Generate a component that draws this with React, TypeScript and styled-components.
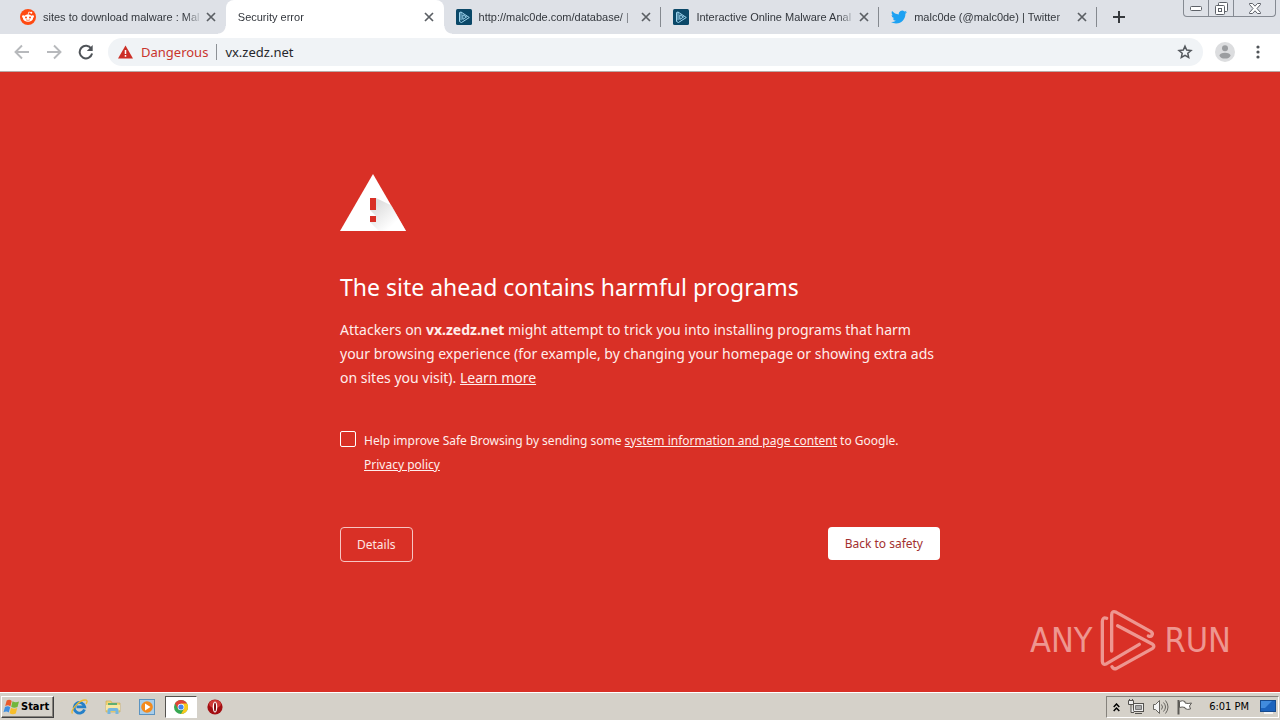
import React from "react";
import styled, { createGlobalStyle, css } from "styled-components";

const RED = "#d93026";
const UI_FONT = `"DejaVu Sans Condensed", "DejaVu Sans", sans-serif`;
const TAB_FONT = `"Liberation Sans", Arial, sans-serif`;
const PAGE_FONT = `"Noto Sans", "Open Sans", sans-serif`;

const GlobalStyle = createGlobalStyle`
  * { box-sizing: border-box; }
  body { margin: 0; font-family: ${PAGE_FONT}; }
  button { font: inherit; cursor: pointer; }
  svg { display: block; flex: none; }
`;

const Desktop = styled.div`
  display: flex;
  flex-direction: column;
  min-height: 100vh;
  background: ${RED};
`;

const TabStrip = styled.header`
  display: flex;
  align-items: flex-start;
  height: 34px;
  padding-left: 8px;
  background: #dee1e7;
`;

const TabList = styled.div`
  display: flex;
  flex: 0 1 1089px;
  min-width: 0;
  height: 34px;
`;

const Tab = styled.div<{ $active?: boolean; $divider?: boolean }>`
  position: relative;
  display: flex;
  flex: 1 1 0;
  align-items: center;
  min-width: 0;
  padding: 0 7px 0 12px;
  color: #33373d;
  & > svg {
    margin-right: 7px;
  }
  ${(p) =>
    p.$divider &&
    css`
      &::after {
        content: "";
        position: absolute;
        right: 0;
        top: 7px;
        width: 1px;
        height: 20px;
        background: #85898f;
      }
    `}
  ${(p) =>
    p.$active &&
    css`
      background: #fff;
      border-radius: 8px 8px 0 0;
      &::before,
      &::after {
        content: "";
        position: absolute;
        bottom: 0;
        width: 8px;
        height: 8px;
      }
      &::before {
        right: 100%;
        background: radial-gradient(circle at 0 0, transparent 7px, #fff 8px);
      }
      &::after {
        left: 100%;
        background: radial-gradient(circle at 100% 0, transparent 7px, #fff 8px);
      }
    `}
`;

const TabTitle = styled.span`
  flex: 1;
  min-width: 0;
  overflow: hidden;
  white-space: nowrap;
  font: 11px/16px ${TAB_FONT};
  mask-image: linear-gradient(to right, #000 calc(100% - 18px), transparent);
`;

const IconButton = styled.button<{ $size: number }>`
  display: flex;
  flex: none;
  align-items: center;
  justify-content: center;
  width: ${(p) => p.$size}px;
  height: ${(p) => p.$size}px;
  padding: 0;
  border: 0;
  background: none;
  color: #5b5f64;
`;

const NewTab = styled(IconButton)`
  margin: 6px 0 0 11px;
  color: #36393d;
`;

const WindowControls = styled.div`
  display: flex;
  flex: none;
  height: 17px;
  margin: 0 4px 0 auto;
  border: 1px solid #858a92;
  border-top: 0;
  border-radius: 0 0 4px 4px;
`;

const WindowButton = styled.button<{ $width: number }>`
  display: flex;
  align-items: center;
  justify-content: center;
  width: ${(p) => p.$width}px;
  padding: 0;
  border: 0;
  background: none;
  & + & {
    border-left: 1px solid #858a92;
  }
`;

const Toolbar = styled.div`
  display: flex;
  align-items: center;
  height: 38px;
  padding: 0 11px 2px 10px;
  gap: 8px;
  background: #fff;
  border-bottom: 1px solid #b9aaa7;
`;

const NavButtons = styled.div`
  display: flex;
  gap: 8px;
  margin-right: 2px;
`;

const Omnibox = styled.form`
  display: flex;
  flex: 1;
  align-items: center;
  gap: 8px;
  min-width: 0;
  height: 28px;
  padding: 0 6px 0 10px;
  border-radius: 14px;
  background: #f0f3f6;
  font-size: 13px;
`;

const Danger = styled.span`
  padding-right: 8px;
  border-right: 1px solid #8d9196;
  color: #c9352d;
  line-height: 16px;
`;

const Address = styled.input`
  flex: 1;
  min-width: 0;
  padding: 0;
  border: 0;
  outline: 0;
  background: none;
  color: #26282c;
  font: 13px/20px ${PAGE_FONT};
`;

const Page = styled.main`
  position: relative;
  flex: 1;
  padding: 102px 24px 24px;
  color: #fff;
`;

const Interstitial = styled.section`
  max-width: 600px;
  margin: 0 auto;
`;

const Heading = styled.h1`
  margin: 40px 0 15px;
  font-size: 23px;
  font-weight: 400;
  line-height: 32px;
`;

const Message = styled.p`
  margin: 0;
  font-size: 14px;
  line-height: 24px;
  color: #ffeeec;
`;

const Link = styled.a`
  color: inherit;
  text-decoration: underline;
`;

const OptIn = styled.div`
  display: flex;
  gap: 8px;
  margin-top: 39px;
  font-size: 12px;
  line-height: 24px;
  color: #ffeeec;
`;

const Checkbox = styled.input`
  flex: none;
  appearance: none;
  width: 16px;
  height: 16px;
  margin: 2px 0 0;
  border: 1px solid #fff;
  border-radius: 2px;
`;

const Actions = styled.div`
  display: flex;
  align-items: flex-start;
  justify-content: space-between;
  margin-top: 50px;
  font-size: 12px;
`;

const ActionButton = styled.button<{ $primary?: boolean }>`
  height: ${(p) => (p.$primary ? 33 : 35)}px;
  padding: 0 ${(p) => (p.$primary ? 17 : 16)}px;
  border: ${(p) => (p.$primary ? "0" : "1px solid #f7c5c2")};
  border-radius: 4px;
  background: ${(p) => (p.$primary ? "#fff" : "transparent")};
  color: ${(p) => (p.$primary ? "#a3302f" : "#ffe6e4")};
`;

const Watermark = styled.div`
  position: absolute;
  right: 49px;
  bottom: 20px;
  display: flex;
  align-items: center;
  gap: 8px;
  color: #ee9690;
  font: 34px/64px ${UI_FONT};
`;

const Taskbar = styled.footer`
  display: flex;
  align-items: center;
  height: 28px;
  padding: 1px 1px 0;
  border-top: 1px solid #fff;
  background: #d5d1c9;
`;

const StartButton = styled.button`
  display: flex;
  align-items: center;
  gap: 1px;
  width: 53px;
  height: 22px;
  padding: 0 1px;
  border: 1px solid;
  border-color: #fff #404040 #404040 #fff;
  background: #d5d1c9;
  box-shadow: inset -1px -1px #86827b;
  font: bold 11px/16px ${UI_FONT};
  color: #000;
`;

const QuickLaunch = styled.nav`
  display: flex;
  gap: 2px;
  margin-left: 9px;
`;

const TaskButton = styled.button<{ $pressed?: boolean }>`
  display: flex;
  align-items: center;
  justify-content: center;
  width: 32px;
  height: 22px;
  padding: 0;
  border: 1px solid transparent;
  background: none;
  ${(p) =>
    p.$pressed &&
    css`
      border-color: #55534f #fff #fff #55534f;
      background: #fff;
    `}
`;

const Tray = styled.div`
  display: flex;
  align-items: center;
  gap: 8px;
  height: 22px;
  margin-left: auto;
  padding: 0 2px 0 6px;
  border: 1px solid;
  border-color: #85827c #fff #fff #85827c;
`;

const Clock = styled.time`
  margin: 0 3px 0 8px;
  font: 11px/16px ${UI_FONT};
  color: #000;
`;

const CloseIcon = () => (
  <svg width="10" height="10" viewBox="0 0 10 10" stroke="currentColor" strokeWidth="1.7">
    <path d="M1 1l8 8M9 1l-8 8" />
  </svg>
);

const RedditIcon = () => (
  <svg width="16" height="16" viewBox="0 0 16 16">
    <circle cx="8" cy="8" r="8" fill="#ff4a12" />
    <path d="M8 6l.8-3 2.3.6" fill="none" stroke="#fff" strokeWidth=".8" />
    <circle cx="11.3" cy="3.7" r="1" fill="#fff" />
    <circle cx="3.3" cy="7.6" r="1.3" fill="#fff" />
    <circle cx="12.7" cy="7.6" r="1.3" fill="#fff" />
    <ellipse cx="8" cy="9.2" rx="5" ry="3.6" fill="#fff" />
    <circle cx="6" cy="8.5" r="1" fill="#ff4a12" />
    <circle cx="10" cy="8.5" r="1" fill="#ff4a12" />
    <path d="M6 10.8q2 1.1 4 0" fill="none" stroke="#ff4a12" strokeWidth=".7" />
  </svg>
);

const PlayIcon = () => (
  <svg width="16" height="16" viewBox="0 0 16 16">
    <rect width="16" height="16" rx="1.5" fill="#0b4868" />
    <g fill="none" stroke="#9ed5ef" strokeWidth="1" strokeLinejoin="round">
      <path d="M3.5 3.5v9l2 1 7.8-5L5 3v8.3" />
      <path d="M6.8 5.8v4.6L10.6 8zM3.5 3.5L5 3" />
    </g>
  </svg>
);

const TwitterIcon = () => (
  <svg width="16" height="14" viewBox="0 2 24 20" fill="#1da1f2">
    <path d="M23.95 4.57a10 10 0 0 1-2.82.77 4.96 4.96 0 0 0 2.16-2.72c-.95.55-2 .96-3.13 1.18a4.92 4.92 0 0 0-8.38 4.48C7.69 8.1 4.07 6.13 1.64 3.16a4.82 4.82 0 0 0-.67 2.48c0 1.7.87 3.2 2.19 4.1a4.9 4.9 0 0 1-2.23-.62v.06a4.92 4.92 0 0 0 3.95 4.83 5 5 0 0 1-2.21.08 4.94 4.94 0 0 0 4.6 3.42A9.87 9.87 0 0 1 0 19.54a13.99 13.99 0 0 0 7.56 2.21c9.05 0 14-7.5 14-13.98 0-.21 0-.42-.02-.63a9.94 9.94 0 0 0 2.46-2.55z" />
  </svg>
);

const ArrowIcon = ({ forward }: { forward?: boolean }) => (
  <svg width="16" height="16" viewBox="0 0 16 16" fill="none" stroke="#b7b9bc" strokeWidth="1.9">
    <path d={forward ? "M1 8h13M8 1.5L14.5 8 8 14.5" : "M15 8H2M8 1.5L1.5 8 8 14.5"} />
  </svg>
);

const ReloadIcon = () => (
  <svg width="16" height="16" viewBox="0 0 16 16" fill="none" stroke="#4f5358" strokeWidth="2">
    <path d="M13.3 4.7A6.3 6.3 0 1 0 14.1 9.6" />
    <path d="M14.7 1v6H8.8z" fill="#4f5358" stroke="none" />
  </svg>
);

const DangerIcon = () => (
  <svg width="15" height="14" viewBox="0 0 15 14">
    <path d="M7.5 0.5L15 13.5H0z" fill="#cc2f27" />
    <path d="M7.5 5v4M7.5 10v1.7" stroke="#fff" strokeWidth="1.5" />
  </svg>
);

const StarIcon = () => (
  <svg width="16" height="16" viewBox="0 0 16 16" fill="none" stroke="#54585d" strokeWidth="1.5">
    <path d="M8 2.2l1.7 3.9 4.3.4-3.2 2.8.9 4.2L8 11.3l-3.7 2.2.9-4.2L2 6.5l4.300-.4z" />
  </svg>
);

const AvatarIcon = () => (
  <svg width="20" height="20" viewBox="0 0 20 20">
    <circle cx="10" cy="10" r="10" fill="#dcdddf" />
    <circle cx="10" cy="6.3" r="3" fill="#9b9da0" />
    <ellipse cx="10" cy="13.6" rx="5.5" ry="2.9" fill="#9b9da0" />
  </svg>
);

const MenuIcon = () => (
  <svg width="4" height="14" viewBox="0 0 4 14" fill="#505458">
    <circle cx="2" cy="2" r="1.6" />
    <circle cx="2" cy="7" r="1.6" />
    <circle cx="2" cy="12" r="1.6" />
  </svg>
);

const WarningIcon = () => (
  <svg width="66" height="57" viewBox="0 0 66 57">
    <defs>
      <linearGradient id="shade" gradientUnits="userSpaceOnUse" x1="34" y1="32" x2="52" y2="52">
        <stop offset="0" stopColor="#c8c8c8" />
        <stop offset="1" stopColor="#fff" />
      </linearGradient>
    </defs>
    <path d="M33 0l33 57H0z" fill="#fff" />
    <path d="M36 24l15.500 7.600L66 57H39L30 48h6v-6l-6-6h6z" fill="url(#shade)" opacity=".6" />
    <path d="M30 24h6v12h-6zM30 42h6v6h-6z" fill={RED} />
  </svg>
);

const BrandIcon = () => (
  <svg
    width="56"
    height="62"
    viewBox="18 8 168 186"
    fill="none"
    stroke="currentColor"
    strokeWidth="10"
    strokeLinecap="round"
    strokeLinejoin="round"
  >
    <path d="M53 134V26q0-15 14-8l104 58q7 5 2 12-3 4-10 1" />
    <path d="M38 36q-12-5-13 9v120q1 13 13 7l98-58" />
    <path d="M71 58l105 56q7 6 0 12L68 186q-10 4-14-5" />
  </svg>
);

const MinimizeIcon = () => (
  <svg width="12" height="5" viewBox="0 0 12 5">
    <rect x=".5" y=".5" width="11" height="4" rx="1" fill="#fff" stroke="#5d6168" />
  </svg>
);

const RestoreIcon = () => (
  <svg width="13" height="13" viewBox="0 0 13 13" fill="#fff" stroke="#5d6168">
    <rect x="3.5" y=".5" width="9" height="9" rx="1" />
    <rect x=".5" y="3.5" width="9" height="9" rx="1" />
    <rect x="3.5" y="6.5" width="3" height="3" />
  </svg>
);

const WindowCloseIcon = () => (
  <svg width="12" height="11" viewBox="0 0 12 11" fill="#fff" stroke="#5d6168">
    <path d="M.5.5h3L6 3.200 8.500.5h3v1L8 5.500l3.500 4v1h-3L6 7.800 3.500 10.500h-3v-1L4 5.500.5 1.500z" />
  </svg>
);

const FlagIcon = () => (
  <svg width="17" height="16" viewBox="0 0 16 16">
    <path d="M3.200 1.500q3-1.500 5 .5L6.900 7.400q-2-2-5.200-.4z" fill="#ea5a2a" />
    <path d="M9 2.300q3 1.800 6.500.2L14 8q-3.500 1.500-6.300-.2z" fill="#72b63c" />
    <path d="M1.500 8q3-1.800 5.200.2L5.200 13.600q-2-2-5.200-.4z" fill="#3f8fe0" />
    <path d="M7.500 8.700q3 1.800 6.200.2L12.300 14.500q-3.300 1.500-6.200-.3z" fill="#f7be2a" />
  </svg>
);

const ExplorerIcon = () => (
  <svg width="17" height="16" viewBox="0 0 17 16" fill="none">
    <path d="M13.500 10.500A5.300 5.300 0 1 1 13.700 7.800H5.500" stroke="#2580c8" strokeWidth="2.800" />
    <path d="M1.500 14.500C-1 11.500 9-.5 15.500 1.200q1.300.7-.4 3.600" stroke="#efb92c" strokeWidth="1.300" />
  </svg>
);

const FolderIcon = () => (
  <svg width="16" height="16" viewBox="0 0 16 16">
    <path d="M1 2h5l1 2h8v9H1z" fill="#f0d477" stroke="#c9a94c" strokeWidth=".6" />
    <path d="M3 4h9v3H3z" fill="#5eae72" />
    <path d="M1 6h14v5H1z" fill="#f8e7a3" />
    <path d="M2.500 15V11q0-2 2-2h7q2 0 2 2v4h-3v-3h-5v3z" fill="#74b6df" />
  </svg>
);

const MediaIcon = () => (
  <svg width="16" height="16" viewBox="0 0 16 16">
    <rect x=".5" y=".5" width="15" height="15" fill="#a7cdea" stroke="#5b93c0" />
    <circle cx="8" cy="8" r="5.800" fill="#f38a1c" />
    <path d="M6 4.500L11.500 8 6 11.500z" fill="#fff" />
  </svg>
);

const ChromeIcon = () => (
  <svg width="14" height="14" viewBox="0 0 14 14">
    <circle cx="7" cy="7" r="7" fill="#37a852" />
    <path d="M7 7L.94 3.500A7 7 0 0 1 13.060 3.500z" fill="#df4437" />
    <path d="M7 3.500h6.060A7 7 0 0 1 7 14l3-5.300z" fill="#fbc91c" />
    <path d="M.94 3.500L4 8.700 7 3.500z" fill="#df4437" />
    <circle cx="7" cy="7" r="3.300" fill="#fff" />
    <circle cx="7" cy="7" r="2.600" fill="#4384ee" />
  </svg>
);

const OperaIcon = () => (
  <svg width="16" height="16" viewBox="0 0 16 16">
    <circle cx="8" cy="8" r="7.600" fill="#a30e12" />
    <ellipse cx="8" cy="5" rx="6" ry="4" fill="#cf3a37" />
    <ellipse cx="8" cy="8" rx="2.300" ry="5.500" fill="#fff" />
    <ellipse cx="8" cy="8" rx="1" ry="4.500" fill="#7d090c" />
  </svg>
);

const ChevronsIcon = () => (
  <svg width="7" height="9" viewBox="0 0 7 9" fill="none" stroke="#000" strokeWidth="1.5">
    <path d="M.7 4l2.800-3 2.800 3M.7 8l2.800-3 2.800 3" />
  </svg>
);

const NetworkIcon = () => (
  <svg width="16" height="16" viewBox="0 0 16 16" fill="#eee" stroke="#54524f">
    <rect x="5.500" y="4.500" width="10" height="8" />
    <path d="M7.500 6.500h6v4h-6z" fill="#aaa" stroke="#777" />
    <path d="M7 14.500h7" />
    <path d="M.5 1.500h5v4h-5zM1.500 0v2M4.500 0v2M3 5.500v8h3" />
  </svg>
);

const SpeakerIcon = () => (
  <svg width="17" height="16" viewBox="0 0 17 16" fill="none" stroke="#66645f">
    <path d="M1.500 5.500h2l4-4v13l-4-4h-2z" fill="#f4f4f4" />
    <path d="M9.500 5.500q2 2.500 0 5M11.500 3.500q4 4.500 0 9M13.500 1.500q5 6.500 0 13" />
  </svg>
);

const ActionFlagIcon = () => (
  <svg width="16" height="16" viewBox="0 0 16 16" fill="#fff" stroke="#5c5a56">
    <path d="M1.500 1v14.500" strokeWidth="2" />
    <path d="M2.500 2.500q3-1.500 5.500 0v1.500q3 1 6.500 0l-2 3 1 3q-3 1-5.500-.5v-1q-3-1-5.500 0z" />
  </svg>
);

const ShowDesktopIcon = () => (
  <svg width="16" height="14" viewBox="0 0 16 14">
    <rect x=".5" y=".5" width="15" height="11" fill="#1c63bd" stroke="#164a8d" />
    <path d="M1 1h11L5 8H1z" fill="#418bdd" />
    <path d="M4 13h9" stroke="#f3f3f3" strokeWidth="2" />
  </svg>
);

const tabs = [
  { title: "sites to download malware : Mal", icon: <RedditIcon /> },
  { title: "Security error", active: true },
  { title: "http://malc0de.com/database/ |", icon: <PlayIcon />, divider: true },
  { title: "Interactive Online Malware Anal", icon: <PlayIcon />, divider: true },
  { title: "malc0de (@malc0de) | Twitter", icon: <TwitterIcon />, divider: true },
];

export default function App() {
  return (
    <Desktop>
      <GlobalStyle />
      <TabStrip>
        <TabList>
          {tabs.map((tab) => (
            <Tab key={tab.title} $active={tab.active} $divider={tab.divider}>
              {tab.icon}
              <TabTitle>{tab.title}</TabTitle>
              <IconButton $size={16} aria-label="Close tab">
                <CloseIcon />
              </IconButton>
            </Tab>
          ))}
        </TabList>
        <NewTab $size={22} aria-label="New tab">
          <svg width="12" height="12" viewBox="0 0 12 12" stroke="currentColor" strokeWidth="2">
            <path d="M6 0v12M0 6h12" />
          </svg>
        </NewTab>
        <WindowControls>
          <WindowButton $width={24} aria-label="Minimize">
            <MinimizeIcon />
          </WindowButton>
          <WindowButton $width={25} aria-label="Restore">
            <RestoreIcon />
          </WindowButton>
          <WindowButton $width={42} aria-label="Close">
            <WindowCloseIcon />
          </WindowButton>
        </WindowControls>
      </TabStrip>

      <Toolbar>
        <NavButtons>
          <IconButton $size={24} aria-label="Back">
            <ArrowIcon />
          </IconButton>
          <IconButton $size={24} aria-label="Forward">
            <ArrowIcon forward />
          </IconButton>
          <IconButton $size={24} aria-label="Reload">
            <ReloadIcon />
          </IconButton>
        </NavButtons>
        <Omnibox onSubmit={(e) => e.preventDefault()}>
          <DangerIcon />
          <Danger>Dangerous</Danger>
          <Address aria-label="Address" defaultValue="vx.zedz.net" />
          <IconButton $size={24} type="button" aria-label="Bookmark this page">
            <StarIcon />
          </IconButton>
        </Omnibox>
        <IconButton $size={28} aria-label="Profile">
          <AvatarIcon />
        </IconButton>
        <IconButton $size={22} aria-label="Menu">
          <MenuIcon />
        </IconButton>
      </Toolbar>

      <Page>
        <Interstitial>
          <WarningIcon />
          <Heading>The site ahead contains harmful programs</Heading>
          <Message>
            Attackers on <strong>vx.zedz.net</strong> might attempt to trick you into installing programs that harm
            your browsing experience (for example, by changing your homepage or showing extra ads on sites you
            visit). <Link href="#learn-more">Learn more</Link>
          </Message>
          <OptIn>
            <Checkbox type="checkbox" id="opt-in" />
            <label htmlFor="opt-in">
              Help improve Safe Browsing by sending some{" "}
              <Link href="#data">system information and page content</Link> to Google.{" "}
              <Link href="#privacy">Privacy policy</Link>
            </label>
          </OptIn>
          <Actions>
            <ActionButton>Details</ActionButton>
            <ActionButton $primary>Back to safety</ActionButton>
          </Actions>
        </Interstitial>
        <Watermark>
          <span>ANY</span>
          <BrandIcon />
          <span>RUN</span>
        </Watermark>
      </Page>

      <Taskbar>
        <StartButton>
          <FlagIcon />
          Start
        </StartButton>
        <QuickLaunch aria-label="Quick launch">
          <TaskButton aria-label="Internet Explorer">
            <ExplorerIcon />
          </TaskButton>
          <TaskButton aria-label="Windows Explorer">
            <FolderIcon />
          </TaskButton>
          <TaskButton aria-label="Media Player">
            <MediaIcon />
          </TaskButton>
          <TaskButton $pressed aria-label="Chrome">
            <ChromeIcon />
          </TaskButton>
          <TaskButton aria-label="Opera">
            <OperaIcon />
          </TaskButton>
        </QuickLaunch>
        <Tray>
          <ChevronsIcon />
          <NetworkIcon />
          <SpeakerIcon />
          <ActionFlagIcon />
          <Clock>6:01 PM</Clock>
          <ShowDesktopIcon />
        </Tray>
      </Taskbar>
    </Desktop>
  );
}
